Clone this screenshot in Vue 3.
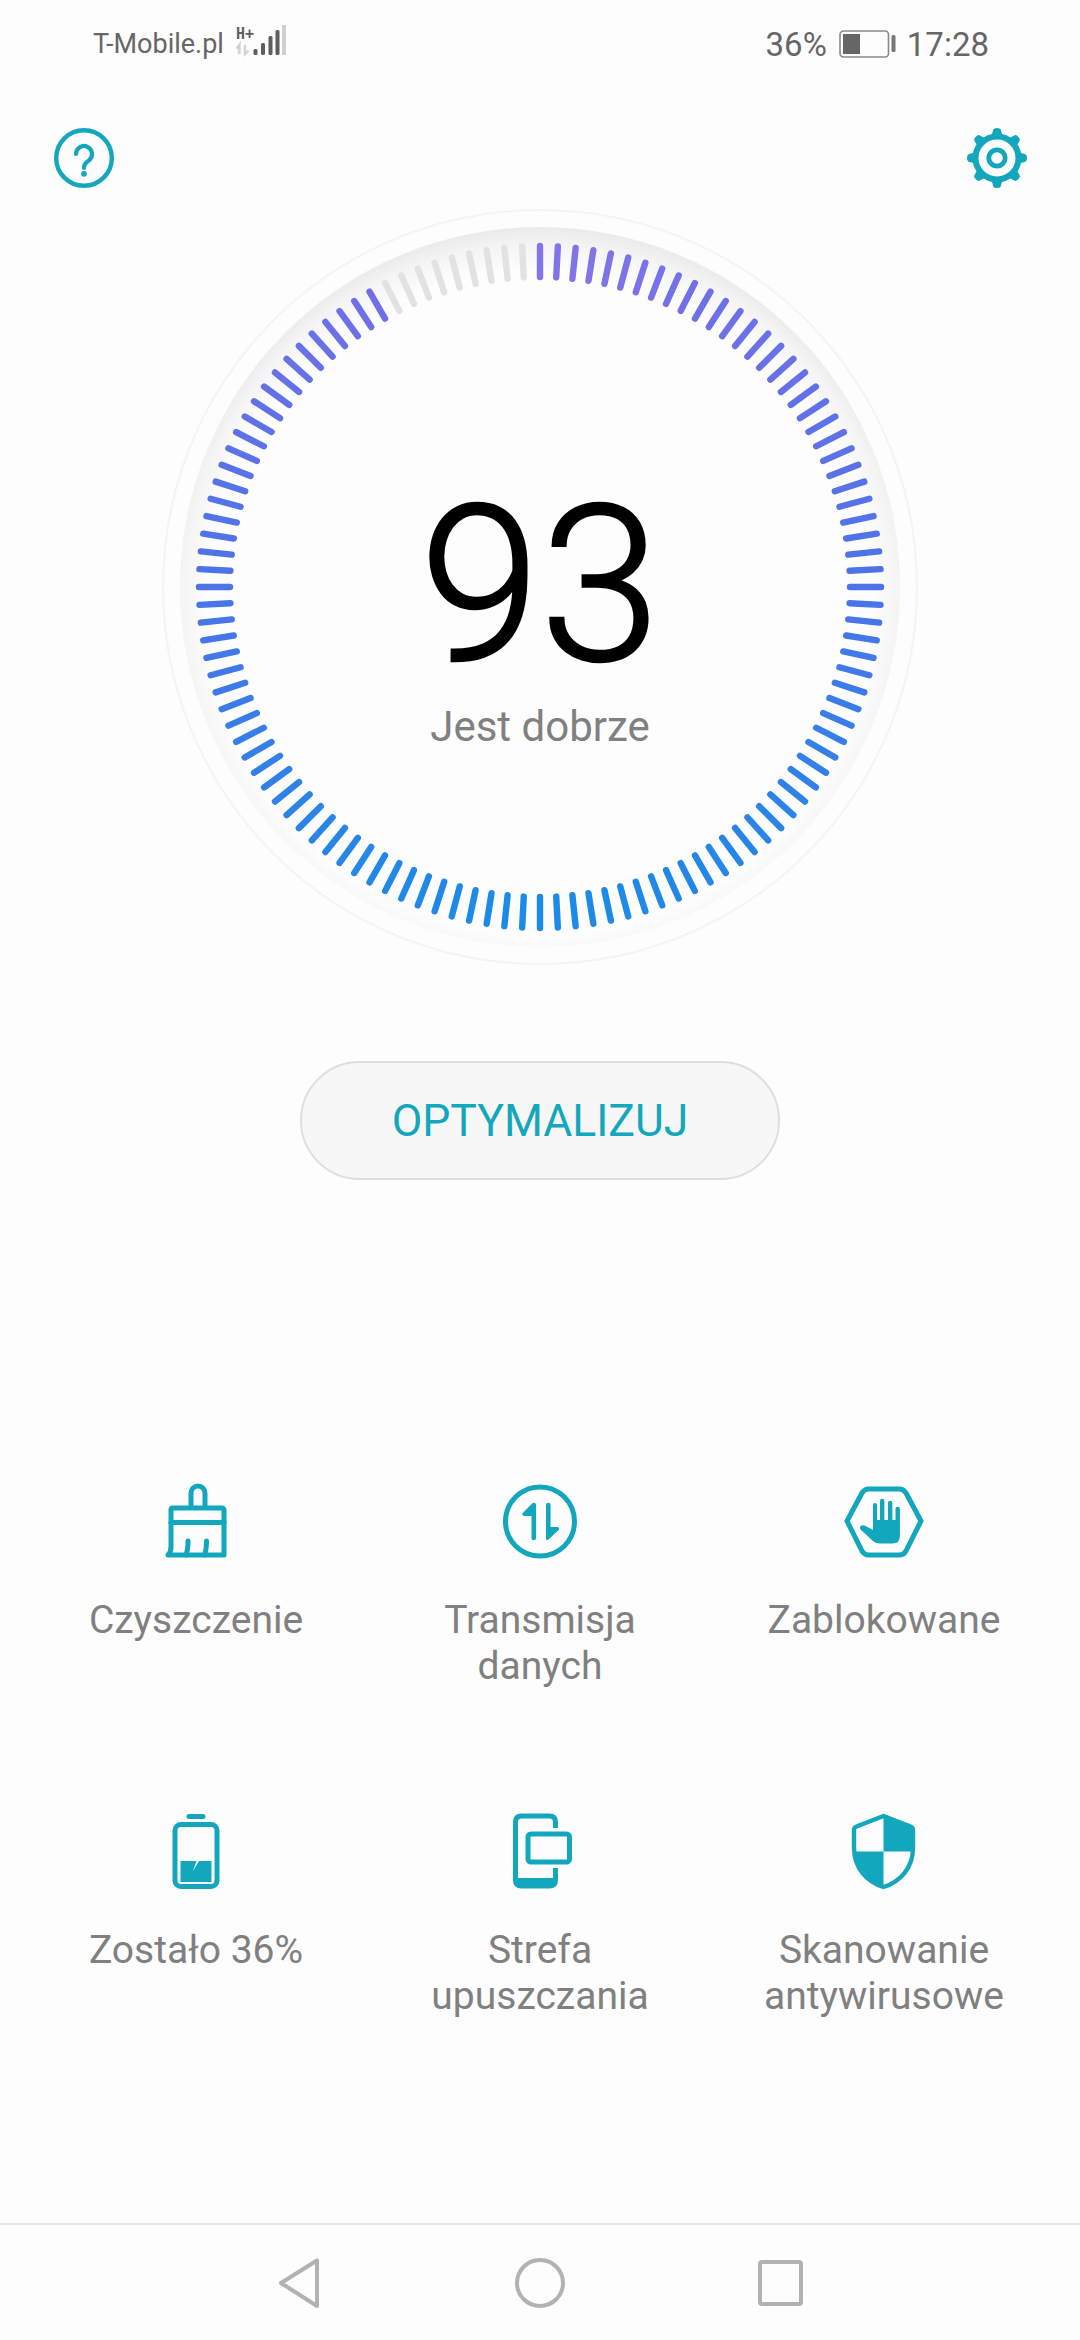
<script setup>
import { computed } from 'vue'

const CX = 540
const CY = 389
const mix = (a, b, t) => a.map((v, i) => Math.round(v + (b[i] - v) * t))
const tickColour = (y) => {
  const t = (y - 46) / 690
  const stops = [[138, 120, 230], [112, 112, 232], [74, 116, 232], [26, 140, 232]]
  const at = [0, 0.08, 0.5, 1]
  let i = 0
  while (i < 2 && t > at[i + 1]) i++
  const c = mix(stops[i], stops[i + 1], Math.min(1, Math.max(0, (t - at[i]) / (at[i + 1] - at[i]))))
  return `rgb(${c.join(',')})`
}
const ticks = computed(() =>
  Array.from({ length: 120 }, (_, i) => {
    const a = (i * 3 * Math.PI) / 180
    const s = Math.sin(a)
    const c = Math.cos(a)
    return {
      x1: CX + 341 * s, y1: CY - 341 * c,
      x2: CX + 310 * s, y2: CY - 310 * c,
      colour: i < 111 ? tickColour(CY - 323 * c) : '#e2e2e2',
    }
  })
)
const teeth = [0, 45, 90, 135, 180, 225, 270, 315]
const tiles = [
  { id: 'broom', box: '1 0 130 120', label: ['Czyszczenie'] },
  { id: 'transfer', box: '-5 0 130 120', label: ['Transmisja', 'danych'] },
  { id: 'hand', box: '-1 0 130 120', label: ['Zablokowane'] },
  { id: 'battery', box: '-9 0 130 120', label: ['Zostało 36%'] },
  { id: 'phone', box: '-15 0 130 120', label: ['Strefa', 'upuszczania'] },
  { id: 'shield', box: '-11 0 130 120', label: ['Skanowanie', 'antywirusowe'] },
]
</script>

<template>
  <div class="page">
    <header class="status">
      <div class="status-side">
        <span class="carrier">T-Mobile.pl</span>
        <svg class="signal" width="50" height="34" viewBox="0 0 50 34">
          <text x="0" y="14" class="hplus">H+</text>
          <path d="M3 20v9M0.5 23.5 3.5 19.5V29M9 20v9l3.5-3.5" fill="none" stroke="#d2d2d2" stroke-width="2.4" />
          <rect x="17.500" y="24" width="4" height="6" rx="1.500" fill="#5f5f5f" />
          <rect x="25" y="18" width="4" height="12" rx="1.500" fill="#5f5f5f" />
          <rect x="32.500" y="11" width="4" height="19" rx="1.500" fill="#5f5f5f" />
          <rect x="39.500" y="5" width="4" height="25" rx="1.500" fill="#5f5f5f" />
          <rect x="46" y="0" width="4" height="30" rx="1" fill="#cfcfcf" />
        </svg>
      </div>
      <div class="status-side">
        <span class="stat">36%</span>
        <svg class="cell" width="57" height="28" viewBox="0 0 57 28">
          <rect x="1" y="1" width="48.500" height="26" rx="3.500" fill="none" stroke="#8a8a8a" stroke-width="1.600" />
          <rect x="4" y="4" width="17" height="20" fill="#666" />
          <rect x="52.500" y="5" width="4" height="17" rx="1.500" fill="#777" />
        </svg>
        <span class="stat">17:28</span>
      </div>
    </header>

    <div class="toolbar">
      <svg width="80" height="80" viewBox="0 0 80 80">
        <circle cx="40" cy="40" r="27.800" fill="none" stroke="#12a7bc" stroke-width="4.400" />
        <path d="M32 36a8 8 0 1 1 13 6.300c-3.500 2.700-5 4-5 7.700" fill="none" stroke="#12a7bc" stroke-width="4.200" stroke-linecap="round" />
        <circle cx="40" cy="55.800" r="2.900" fill="#12a7bc" />
      </svg>
      <svg width="80" height="80" viewBox="0 0 80 80">
        <path
          v-for="t in teeth"
          :key="t"
          :transform="`rotate(${t} 40 40)`"
          d="M34.500 18 36.300 11.500Q37 10 40 10 43 10 43.700 11.500L45.500 18Z"
          fill="#12a7bc"
        />
        <circle cx="40" cy="40" r="21.500" fill="none" stroke="#12a7bc" stroke-width="6" />
        <circle cx="40" cy="40" r="8.200" fill="none" stroke="#12a7bc" stroke-width="4.800" />
      </svg>
    </div>

    <section class="gauge">
      <svg width="1080" height="780" viewBox="0 0 1080 780">
        <defs>
          <radialGradient id="band" gradientUnits="userSpaceOnUse" cx="540" cy="405" r="378">
            <stop offset="0.88" stop-color="#fdfdfd" />
            <stop offset="0.95" stop-color="#f4f4f4" />
            <stop offset="1" stop-color="#e9e9e9" />
          </radialGradient>
        </defs>
        <circle cx="540" cy="389" r="377" fill="none" stroke="#f4f4f4" stroke-width="2" />
        <circle cx="540" cy="389" r="360" fill="url(#band)" />
        <line
          v-for="(t, i) in ticks"
          :key="i"
          :x1="t.x1" :y1="t.y1" :x2="t.x2" :y2="t.y2"
          :stroke="t.colour"
          stroke-width="6.400"
          stroke-linecap="round"
        />
      </svg>
      <div class="readout">
        <div class="score">93</div>
        <div class="verdict">Jest dobrze</div>
      </div>
    </section>

    <button class="optimise">OPTYMALIZUJ</button>

    <section class="tools">
      <div v-for="tile in tiles" :key="tile.id" class="tool">
        <svg class="tool-icon" width="130" height="120" :viewBox="tile.box">
          <g v-if="tile.id === 'broom'" fill="none" stroke="#12a7bc" stroke-width="5" stroke-linecap="round" stroke-linejoin="round">
            <path d="M61 47V33a7 7 0 0 1 14 0V47" />
            <path d="M42 48H92a2 2 0 0 1 2 2V95H38c2-2 3-5 3-8V50a2 2 0 0 1 1-2Z" />
            <path d="M41 62.500H94" />
            <path d="M58 81c0 6-.5 10-2 14M76.500 81c0 6-.5 10-2 14" />
          </g>
          <g v-else-if="tile.id === 'transfer'">
            <circle cx="60" cy="61.500" r="34.500" fill="none" stroke="#12a7bc" stroke-width="5" />
            <path d="M51.500 45a2.300 2.300 0 0 1 4.600 0V78a2.300 2.300 0 0 1-4.600 0V56H44a1.800 1.800 0 0 1-1.200-3L51.500 44Z" fill="#12a7bc" />
            <path d="M66 45a2.300 2.300 0 0 1 4.600 0V67H77.500a1.800 1.800 0 0 1 1.200 3L68.500 79.500A1.500 1.500 0 0 1 66 78Z" fill="#12a7bc" />
          </g>
          <g v-else-if="tile.id === 'hand'">
            <path d="M27 61 42 33a8 8 0 0 1 6-4H79a8 8 0 0 1 7 4L101 61 86 91a8 8 0 0 1-7 4H48a8 8 0 0 1-6-4Z" fill="none" stroke="#12a7bc" stroke-width="5" stroke-linejoin="round" />
            <path d="M53 45a2 2 0 0 1 4 0V60H60V41a2.200 2.200 0 0 1 4.400 0V60H68V43a2.200 2.200 0 0 1 4.400 0V60H75.500V49a2.200 2.200 0 0 1 4.400 0V76q0 7.500-7.500 7.500H60q-4 0-7-2.500L41 70q-2.500-3 .5-4.500 2-.5 4 .5L53 70Z" fill="#12a7bc" />
          </g>
          <g v-else-if="tile.id === 'battery'">
            <rect x="46.500" y="24" width="19" height="5" rx="2.500" fill="#12a7bc" />
            <rect x="35" y="34.500" width="42" height="62" rx="6" fill="none" stroke="#12a7bc" stroke-width="5" />
            <path d="M40.500 71H56.500L53 81 59 71H71.500V92H40.500Z" fill="#12a7bc" />
          </g>
          <g v-else-if="tile.id === 'phone'">
            <path d="M65.500 38V32q0-6-6-6H31.500q-6 0-6 6V90q0 6 6 6H59.500q6 0 6-6V78" fill="none" stroke="#12a7bc" stroke-width="5" />
            <rect x="25.500" y="88" width="40" height="8" fill="#12a7bc" />
            <rect x="38" y="44" width="41.500" height="28" rx="3" fill="none" stroke="#12a7bc" stroke-width="5" />
          </g>
          <g v-else>
            <path d="M53.500 61.500V26L81 36.500q2.500 1 2.500 3.500V61.500ZM53.500 61.500V97Q28 89 25.500 61.500Z" fill="#12a7bc" />
            <path d="M53.500 26 26.500 36.500q-2.500 1-2.500 3.500V58C24 78 37 92 53.500 97 70 92 83 78 83 58V40q0-2.500-2.500-3.500Z" fill="none" stroke="#12a7bc" stroke-width="4.400" stroke-linejoin="round" />
          </g>
        </svg>
        <div class="tool-label">
          <div v-for="line in tile.label" :key="line">{{ line }}</div>
        </div>
      </div>
    </section>

    <nav class="navbar">
      <svg width="600" height="60" viewBox="0 0 600 60">
        <path d="M41 30 77 7.500V53Z" fill="none" stroke="#b2b2b2" stroke-width="4" stroke-linejoin="round" />
        <circle cx="300" cy="30" r="23" fill="none" stroke="#b2b2b2" stroke-width="4" />
        <rect x="520" y="9" width="41" height="42" rx="2" fill="none" stroke="#b2b2b2" stroke-width="4" />
      </svg>
    </nav>
  </div>
</template>

<style scoped>
.page {
  width: 1080px;
  height: 2340px;
  display: flex;
  flex-direction: column;
  overflow: hidden;
  background: #fdfdfd;
  font-family: Roboto, "Liberation Sans", sans-serif;
}
.status {
  height: 88px;
  padding: 0 91px 0 93px;
  display: flex;
  align-items: center;
  justify-content: space-between;
  flex: none;
  color: #666;
}
.status-side {
  display: flex;
  align-items: center;
}
.carrier {
  font-size: 27px;
}
.signal {
  margin-left: 12px;
  margin-top: -4px;
}
.hplus {
  font-family: "DejaVu Sans Mono", monospace;
  font-weight: 700;
  font-size: 15px;
  fill: #5f5f5f;
}
.stat {
  font-size: 33px;
}
.cell {
  margin: 0 11px 0 12px;
}
.toolbar {
  margin-top: 30px;
  padding: 0 43px 0 44px;
  height: 80px;
  flex: none;
  display: flex;
  justify-content: space-between;
}
.gauge {
  position: relative;
  height: 780px;
  flex: none;
}
.gauge svg {
  display: block;
}
.readout {
  position: absolute;
  left: 0;
  right: 0;
  top: 280px;
  text-align: center;
}
.score {
  font-size: 217px;
  font-weight: 300;
  -webkit-text-stroke: 2.500px #000;
  line-height: 217px;
  color: #000;
}
.verdict {
  margin-top: 7px;
  font-size: 42px;
  line-height: 50px;
  color: #808080;
}
.optimise {
  align-self: center;
  flex: none;
  width: 480px;
  height: 119px;
  margin-top: 83px;
  padding: 0;
  border: 2px solid #dedede;
  border-radius: 60px;
  background: #f7f7f7;
  color: #12a7bc;
  font-family: inherit;
  font-size: 44.500px;
}
.tools {
  margin-top: 280px;
  padding: 0 24px;
  display: grid;
  grid-template-columns: repeat(3, 344px);
  grid-auto-rows: 330px;
}
.tool {
  display: flex;
  flex-direction: column;
  align-items: center;
}
.tool-icon {
  display: block;
}
.tool-label {
  margin-top: 17px;
  font-size: 39px;
  line-height: 46px;
  color: #808080;
  text-align: center;
}
.navbar {
  margin-top: auto;
  height: 117px;
  flex: none;
  border-top: 2px solid #e6e6e6;
  box-sizing: border-box;
  display: flex;
  align-items: center;
  justify-content: center;
}
.navbar svg {
  display: block;
}
</style>

<style>
html, body {
  margin: 0;
  background: #fdfdfd;
}
</style>
